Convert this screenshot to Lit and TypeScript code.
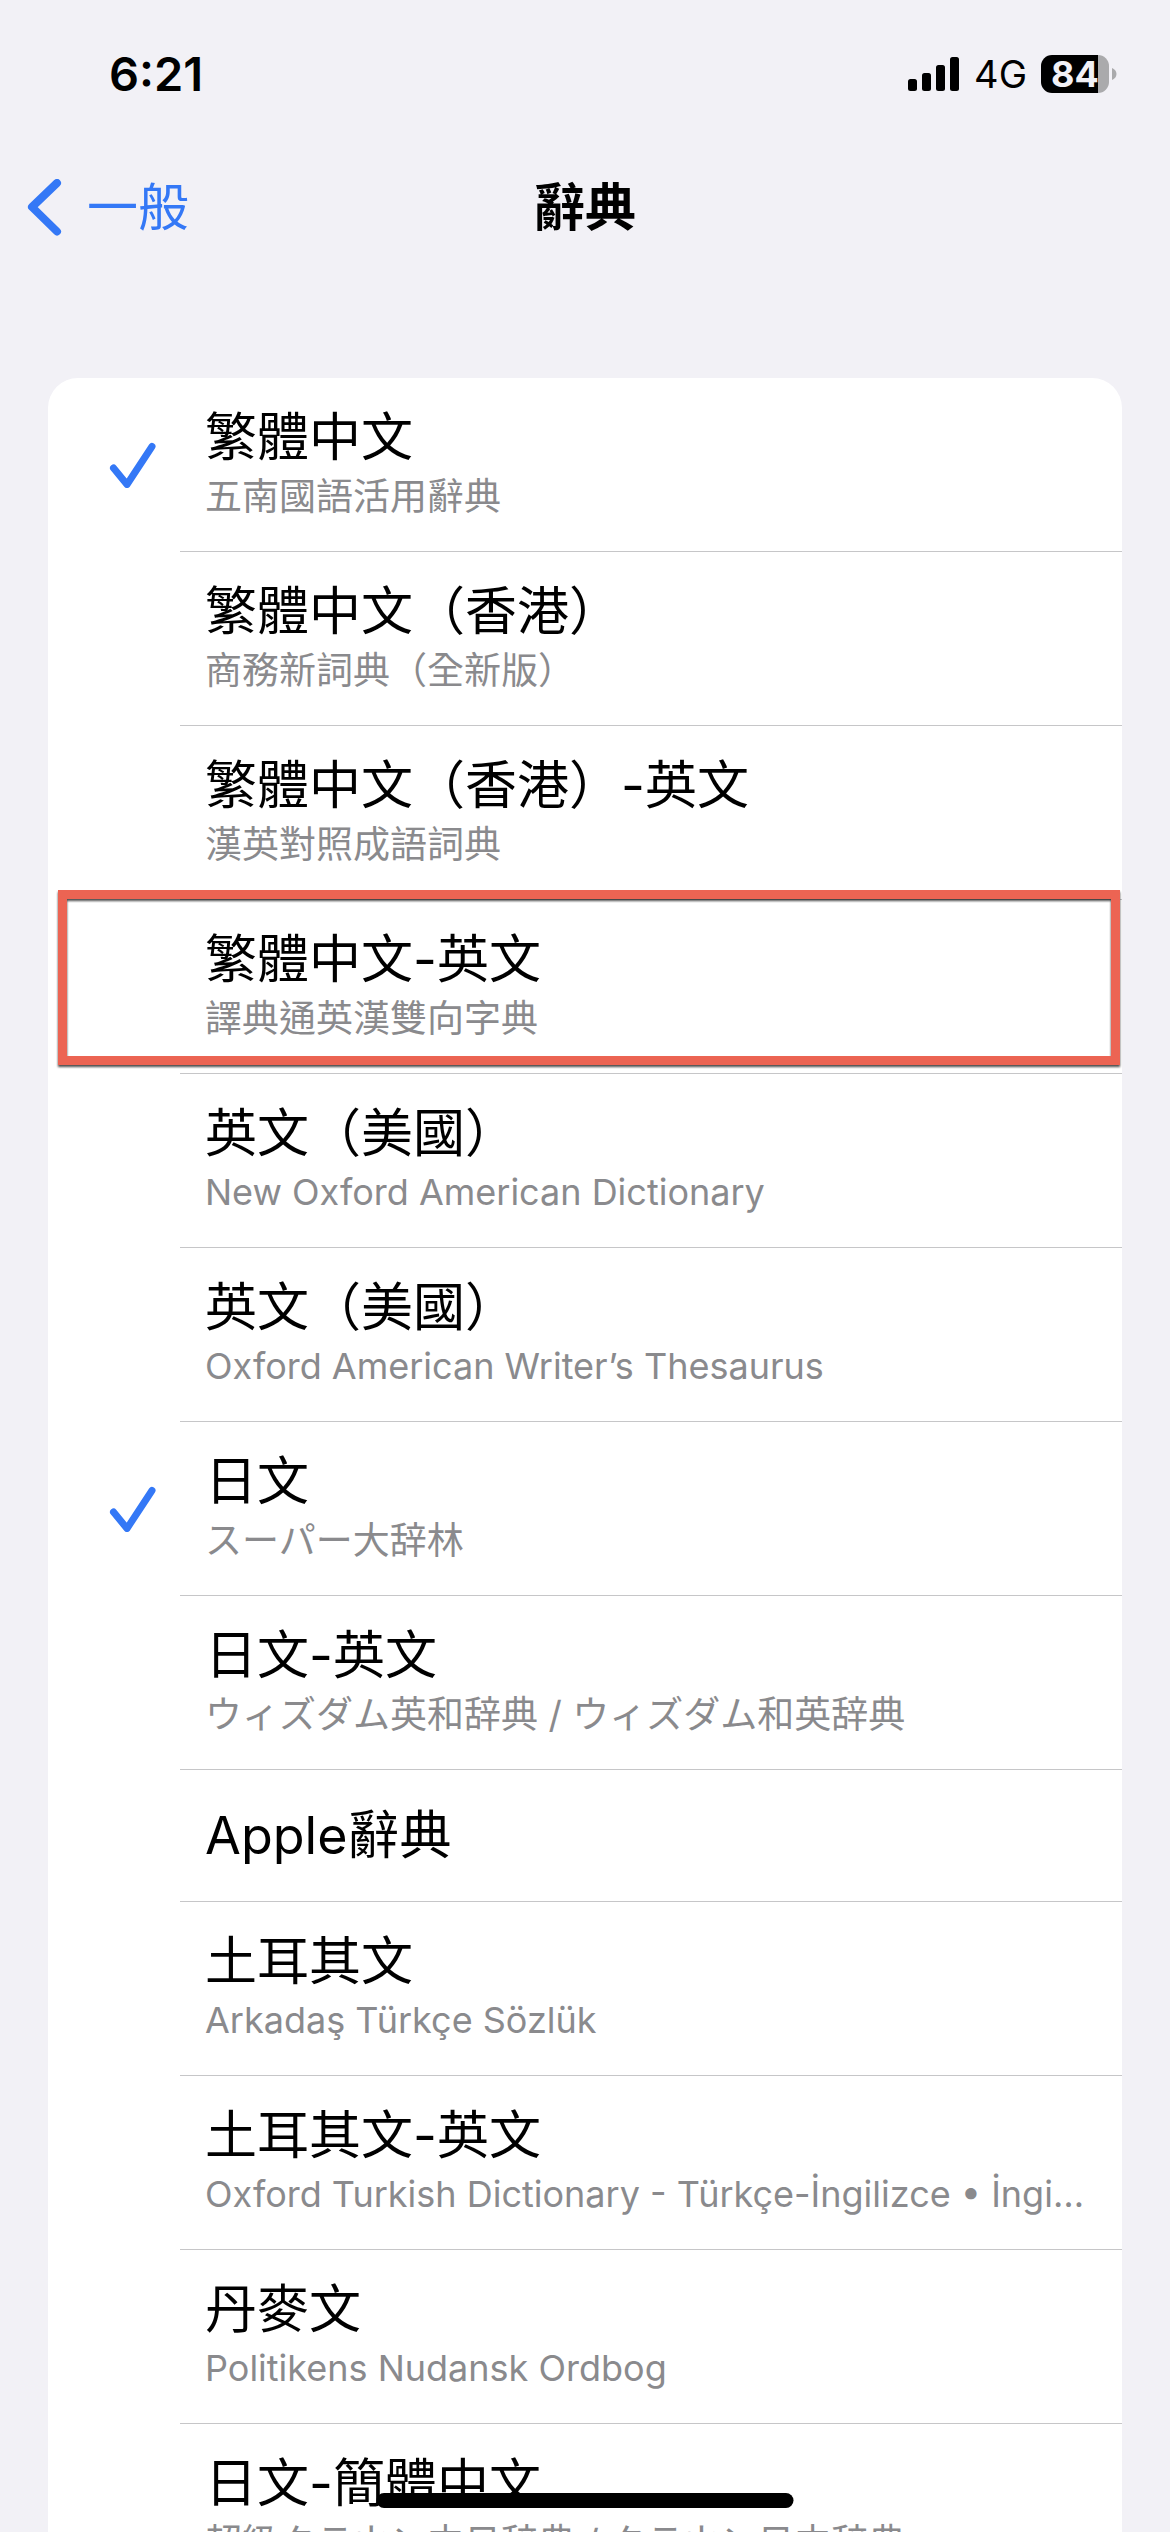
import { LitElement, html, css, nothing } from "lit";
import { customElement, property, state } from "lit/decorators.js";

interface Dictionary {
  title: string;
  detail?: string;
  lang?: string;
  selected?: boolean;
  highlighted?: boolean;
}

const DICTIONARIES: Dictionary[] = [
  { title: "繁體中文", detail: "五南國語活用辭典", selected: true },
  { title: "繁體中文（香港）", detail: "商務新詞典（全新版）" },
  { title: "繁體中文（香港）-英文", detail: "漢英對照成語詞典" },
  { title: "繁體中文-英文", detail: "譯典通英漢雙向字典", highlighted: true },
  { title: "英文（美國）", detail: "New Oxford American Dictionary", lang: "en" },
  { title: "英文（美國）", detail: "Oxford American Writer’s Thesaurus", lang: "en" },
  { title: "日文", detail: "スーパー大辞林", lang: "ja", selected: true },
  { title: "日文-英文", detail: "ウィズダム英和辞典 / ウィズダム和英辞典", lang: "ja" },
  { title: "Apple辭典" },
  { title: "土耳其文", detail: "Arkadaş Türkçe Sözlük", lang: "tr" },
  {
    title: "土耳其文-英文",
    detail: "Oxford Turkish Dictionary - Türkçe-İngilizce • İngilizce-Türkçe",
    lang: "tr",
  },
  { title: "丹麥文", detail: "Politikens Nudansk Ordbog", lang: "da" },
  { title: "日文-簡體中文", detail: "超級クラウン中日辞典 / クラウン日中辞典", lang: "ja" },
];

@customElement("status-bar")
export class StatusBar extends LitElement {
  static styles = css`
    :host {
      display: flex;
      justify-content: space-between;
      align-items: center;
      height: 148px;
      padding: 0 53px 0 109px;
      color: #000;
    }
    .time {
      font-size: 47px;
      font-weight: 600;
      line-height: 56px;
    }
    .indicators {
      display: flex;
      align-items: center;
      gap: 14px;
    }
    .network {
      font-size: 38px;
      font-weight: 400;
      line-height: 44px;
    }
    .signal,
    .nub {
      display: block;
    }
    .battery {
      display: flex;
      align-items: center;
      gap: 3px;
    }
    .cell {
      width: 68px;
      height: 38px;
      border-radius: 11px;
      background: linear-gradient(to right, #000 84%, #aaaaac 84%);
      color: #f2f1f6;
      font-size: 36px;
      font-weight: 700;
      line-height: 38px;
      text-align: center;
    }
  `;

  render() {
    return html`
      <span class="time">6:21</span>
      <div class="indicators">
        <svg class="signal" width="52" height="34" viewBox="0 0 52 34" aria-hidden="true">
          <rect x="0" y="22" width="9" height="12" rx="2.5" />
          <rect x="14" y="16" width="9" height="18" rx="2.5" />
          <rect x="28" y="8" width="9" height="26" rx="2.5" />
          <rect x="42" y="0" width="9" height="34" rx="2.5" />
        </svg>
        <span class="network">4G</span>
        <div class="battery">
          <div class="cell">84</div>
          <svg class="nub" width="5" height="12" viewBox="0 0 5 12" aria-hidden="true">
            <path d="M0 0C2.500 1 4.500 3 4.500 6S2.500 11 0 12Z" fill="#aaaaac" />
          </svg>
        </div>
      </div>
    `;
  }
}

@customElement("nav-header")
export class NavHeader extends LitElement {
  static styles = css`
    :host {
      display: grid;
      grid-template-columns: 1fr auto 1fr;
      align-items: center;
      height: 120px;
      padding: 0 27px;
    }
    .back {
      display: flex;
      align-items: center;
      gap: 25px;
      justify-self: start;
      color: #3478f6;
      font-size: 51px;
      line-height: 60px;
      text-decoration: none;
    }
    .chevron {
      display: block;
    }
    .heading {
      margin: 0;
      color: #000;
      font-size: 51px;
      font-weight: 700;
      line-height: 60px;
    }
  `;

  render() {
    return html`
      <a class="back" href="#general">
        <svg class="chevron" width="35" height="58" viewBox="0 0 35 58" fill="none" aria-hidden="true">
          <path
            d="M30 4 5 28 30 52.500"
            stroke="currentColor"
            stroke-width="8"
            stroke-linecap="round"
            stroke-linejoin="round"
          />
        </svg>
        <span>一般</span>
      </a>
      <h1 class="heading">辭典</h1>
    `;
  }
}

@customElement("dictionary-row")
export class DictionaryRow extends LitElement {
  @property({ attribute: false }) item!: Dictionary;

  static styles = css`
    :host {
      display: block;
      position: relative;
    }
    .row {
      display: flex;
      width: 100%;
      min-height: 132px;
      margin: 0;
      padding: 0;
      border: 0;
      background: none;
      color: #000;
      font: inherit;
      text-align: left;
      cursor: pointer;
    }
    .mark {
      display: flex;
      flex: 0 0 132px;
      box-sizing: border-box;
      align-items: center;
      align-self: stretch;
      justify-content: flex-end;
      padding-right: 24px;
    }
    .body {
      display: flex;
      flex: 1;
      flex-direction: column;
      align-self: stretch;
      justify-content: center;
      box-sizing: border-box;
      min-width: 0;
      padding: 28px 33px 28px 25px;
      border-bottom: 1px solid #c6c6c8;
    }
    .title {
      font-size: 52px;
      line-height: 64px;
    }
    .detail {
      overflow: hidden;
      color: #8a8a8d;
      font-size: 36px;
      line-height: 53px;
      text-overflow: ellipsis;
      white-space: nowrap;
    }
    .detail:lang(zh),
    .detail:lang(ja) {
      font-size: 37px;
    }
    .detail:lang(ja) {
      font-family: Inter, "Noto Sans CJK JP", sans-serif;
    }
    .callout {
      position: absolute;
      inset: -10px 2px 9px 10px;
      border: 9px solid #ec6453;
      filter: drop-shadow(0 2px 1px rgba(0, 0, 0, 0.7));
      pointer-events: none;
    }
  `;

  render() {
    const { title, detail, lang, selected, highlighted } = this.item;
    return html`
      <button class="row" type="button" aria-pressed=${selected ? "true" : "false"}>
        <span class="mark">
          ${selected
            ? html`<svg width="48" height="46" viewBox="0 0 48 46" fill="none" aria-hidden="true">
                <path
                  d="M5.500 26 19 42.500 44 4.500"
                  stroke="#3478f6"
                  stroke-width="7"
                  stroke-linecap="round"
                  stroke-linejoin="round"
                />
              </svg>`
            : nothing}
        </span>
        <span class="body">
          <span class="title">${title}</span>
          ${detail
            ? html`<span class="detail" lang=${lang ?? "zh-Hant"}>${detail}</span>`
            : nothing}
        </span>
      </button>
      ${highlighted ? html`<div class="callout"></div>` : nothing}
    `;
  }
}

@customElement("app-root")
export class AppRoot extends LitElement {
  @state() private items = DICTIONARIES;

  static styles = css`
    :host {
      display: block;
      position: relative;
      height: 100vh;
      overflow: hidden;
      background: #f2f1f6;
      font-family: Inter, "Noto Sans CJK TC", sans-serif;
    }
    .list {
      margin: 110px 48px 0;
      padding: 0;
      border-radius: 30px 30px 0 0;
      background: #fff;
      list-style: none;
    }
    .home-indicator {
      position: absolute;
      bottom: 24px;
      left: 50%;
      width: 417px;
      height: 15px;
      border-radius: 8px;
      background: #000;
      transform: translateX(-50%);
    }
  `;

  render() {
    return html`
      <status-bar></status-bar>
      <nav-header></nav-header>
      <main>
        <ul class="list">
          ${this.items.map((item) => html`<li><dictionary-row .item=${item}></dictionary-row></li>`)}
        </ul>
      </main>
      <div class="home-indicator"></div>
    `;
  }
}
